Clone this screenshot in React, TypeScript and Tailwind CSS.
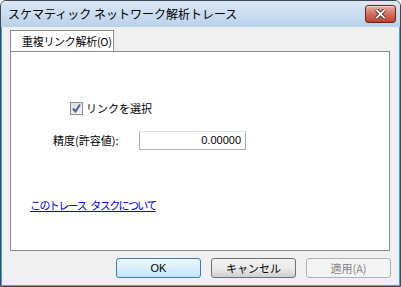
const jp = "font-['Noto_Sans_CJK_JP','Noto_Sans',sans-serif]";

function CloseButton() {
  return (
    <div className="flex h-[18px] w-[31px] items-center justify-center rounded-[3px] border border-[#6b2418] bg-gradient-to-b from-[#e8b0a4] via-[#d0705e] to-[#c0402c] shadow-[inset_0_1px_0_rgba(255,255,255,0.5)]">
      <svg viewBox="0 0 14 12" className="h-[10px] w-[13px]">
        <path d="M2 1 L12 11 M12 1 L2 11" fill="none" stroke="#3a1a14" strokeWidth="4.2" />
        <path d="M2 1 L12 11 M12 1 L2 11" fill="none" stroke="#ffffff" strokeWidth="2.4" />
      </svg>
    </div>
  );
}

function Checkbox() {
  return (
    <div className="flex h-[13px] w-[13px] items-center justify-center border border-[#8e8f8f] bg-gradient-to-br from-[#dcdcdc] to-[#f5f5f5]">
      <svg viewBox="0 0 11 11" className="h-[11px] w-[11px]">
        <path d="M2 5.5 L4.5 8.5 L9 1.5" fill="none" stroke="#4a5fa8" strokeWidth="2" />
      </svg>
    </div>
  );
}

export default function App() {
  return (
    <div className={`flex h-[287px] w-[401px] flex-col overflow-hidden rounded-t-[6px] border border-[#404a55] bg-[#c4d8ee] text-black ${jp}`}>
      <div className="flex h-[26px] items-center justify-between bg-gradient-to-b from-[#dbe8f6] to-[#bad1ea] pl-[7px] pr-[4px]">
        <span className="text-[12px] leading-none">スケマティック ネットワーク解析トレース</span>
        <CloseButton />
      </div>
      <div className="flex flex-1 flex-col border-x border-b border-[#3aa6dc] bg-[#f0f0f0] pl-[8px] pr-[8px] pt-[3px]">
        <div className="flex">
          <div className="flex h-[21px] w-[104px] items-center whitespace-nowrap border-x border-t border-[#898c95] bg-white pl-[11px] text-[11px] leading-none tracking-[-0.3px]">
            重複リンク解析(O)
          </div>
        </div>
        <div className="flex h-[200px] w-[380px] flex-col border border-[#898c95] bg-white text-[11px] leading-none">
          <div className="ml-[59px] mt-[50px] flex items-center gap-[3px]">
            <Checkbox />
            <span>リンクを選択</span>
          </div>
          <div className="ml-[42px] mt-[16px] flex items-center">
            <span className="w-[86px]">精度(許容値):</span>
            <div className="flex h-[19px] w-[107px] items-center justify-end border border-[#abadb3] border-t-[#e2e3ea] pr-[4px] font-['Liberation_Sans',sans-serif] text-[11px] leading-none">
              0.00000
            </div>
          </div>
          <div className="ml-[19px] mt-[50px]">
            <span className="whitespace-pre text-[11px] tracking-[-1.6px] text-[#0000ff] underline">
              このトレース<span className="tracking-[2px]"> </span>タスクについて
            </span>
          </div>
        </div>
        <div className="mt-[7px] flex justify-end gap-[10px] text-[11px] leading-none">
          <div className="flex h-[20px] w-[85px] items-center justify-center rounded-[3px] border border-[#3c7fb1] bg-gradient-to-b from-[#eaf6fd] via-[#d9f0fc] to-[#bee6fd] font-['Liberation_Sans',sans-serif] text-[11px]">
            OK
          </div>
          <div className="flex h-[20px] w-[85px] items-center justify-center rounded-[3px] border border-[#707070] bg-gradient-to-b from-[#f2f2f2] via-[#ebebeb] to-[#cfcfcf]">
            キャンセル
          </div>
          <div className="flex h-[20px] w-[85px] items-center justify-center rounded-[3px] border border-[#adb2b5] bg-[#f4f4f4] text-[#838383]">
            適用(A)
          </div>
        </div>
      </div>
    </div>
  );
}
